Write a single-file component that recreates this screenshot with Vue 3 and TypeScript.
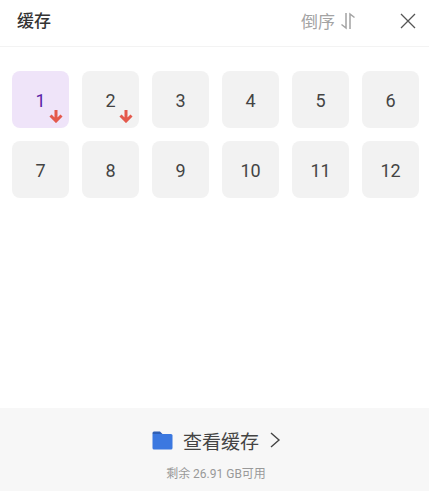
<script setup lang="ts">
const items = Array.from({ length: 12 }, (_, i) => i + 1)
</script>

<template>
  <div class="page">
    <header class="head">
      <span class="title">缓存</span>
      <div class="actions">
        <span class="sort">倒序</span>
        <svg class="sort-icon" width="16" height="18" viewBox="0 0 16 18" fill="none" stroke="#a3a3a3" stroke-width="1.5">
          <path d="M6 1V16L1.5 12.5" />
          <path d="M10 17V2L14.5 5.5" />
        </svg>
        <svg class="close" width="16" height="16" viewBox="0 0 16 16" fill="none" stroke="#555" stroke-width="1.3">
          <path d="M1 1L15 15M15 1L1 15" />
        </svg>
      </div>
    </header>
    <main class="grid">
      <div v-for="n in items" :key="n" class="cell" :class="{ active: n === 1 }">
        <span class="num">{{ n }}</span>
        <svg v-if="n <= 2" class="arrow" width="14" height="13" viewBox="0 0 14 13" fill="none" stroke="#e4594c" stroke-width="3">
          <path d="M7 0V11M1.5 5.5L7 11L12.5 5.5" />
        </svg>
      </div>
    </main>
    <footer class="foot">
      <div class="view">
        <svg width="21" height="19" viewBox="0 0 21 19">
          <path d="M0.5 2Q0.5 0.5 2 0.5H8L10.5 3H0.5Z" fill="#2f5fb5" />
          <path d="M0.5 3H19Q20.5 3 20.5 4.5V17Q20.5 18.5 19 18.5H2Q0.5 18.5 0.5 17Z" fill="#3b78e0" />
        </svg>
        <span class="view-text">查看缓存</span>
        <svg width="12" height="16" viewBox="0 0 12 16" fill="none" stroke="#444" stroke-width="1.4">
          <path d="M2 1L10 8L2 15" />
        </svg>
      </div>
      <div class="free">剩余 26.91 GB可用</div>
    </footer>
  </div>
</template>

<style scoped>
.page {
  width: 429px;
  height: 491px;
  display: flex;
  flex-direction: column;
  background: #fff;
  font-family: Roboto, "Noto Sans CJK SC", sans-serif;
  overflow: hidden;
}
.head {
  flex: none;
  height: 40px;
  padding: 0 13px 6px 17px;
  border-bottom: 1px solid #f3f3f3;
  display: flex;
  align-items: center;
  justify-content: space-between;
}
.title {
  font-size: 17px;
  font-weight: 500;
  color: #333;
  margin-bottom: 2px;
}
.actions {
  display: flex;
  align-items: center;
  margin-top: 1px;
}
.sort {
  font-size: 17px;
  color: #a3a3a3;
}
.sort-icon {
  margin-left: 5px;
}
.close {
  margin-left: 44px;
}
.grid {
  flex: 1;
  display: grid;
  grid-template-columns: repeat(6, 57px);
  grid-auto-rows: 57px;
  gap: 13px;
  padding: 24px 12px 0;
  align-content: start;
}
.cell {
  position: relative;
  display: flex;
  align-items: center;
  justify-content: center;
  border-radius: 8px;
  background: #f2f2f2;
  color: #444;
  font-size: 18px;
}
.num {
  margin-top: 1px;
}
.cell.active {
  background: #efe4f9;
  color: #5a1fa8;
}
.arrow {
  position: absolute;
  right: 6px;
  bottom: 5px;
}
.foot {
  flex: none;
  height: 83px;
  background: #f7f7f7;
  display: flex;
  flex-direction: column;
  align-items: center;
}
.view {
  display: flex;
  align-items: center;
  margin-top: 20px;
  margin-left: 4px;
  height: 24px;
}
.view-text {
  font-size: 19px;
  color: #444;
  margin: 0 10px 0 10px;
}
.free {
  margin-top: 12px;
  margin-left: 3px;
  font-size: 12px;
  color: #999;
}
</style>
<style>
html, body { margin: 0; background: #fff; }
</style>
